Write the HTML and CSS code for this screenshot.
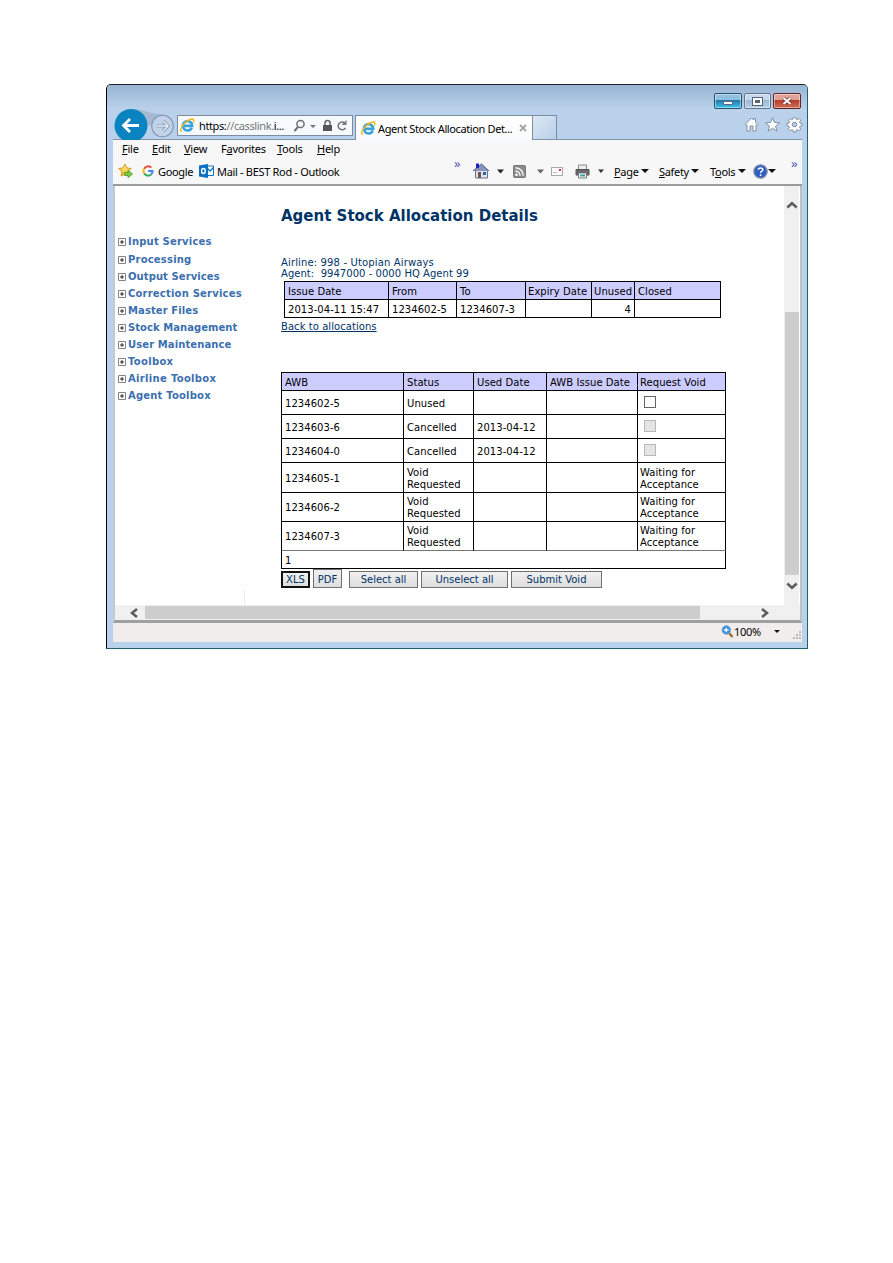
FILE: index.html
```html
<!DOCTYPE html>
<html lang="en">
<head>
<meta charset="utf-8">
<title>Agent Stock Allocation Details</title>
<link rel="stylesheet" href="styles.css">
</head>
<body>
<svg width="0" height="0" class="defs">
  <defs>
    <linearGradient id="gold" x1="0" y1="0" x2="0" y2="1"><stop offset="0" stop-color="#fff2a0"/><stop offset="1" stop-color="#f2b81c"/></linearGradient>
    <symbol id="ie" viewBox="0 0 16 16">
      <path d="M12.6 10.3A5 5 0 1 1 13 8.4H4.2" fill="none" stroke="#35a3dc" stroke-width="2.8"/>
      <path d="M2 13.6C-.6 15.4.5 10.500 4.400 6.200 8.500 1.800 13.800-.2 14.600 1.900c.3.800 0 1.800-.6 2.900" fill="none" stroke="#f3b817" stroke-width="1.500"/>
    </symbol>
    <symbol id="plus" viewBox="0 0 8 8"><path d="M.5.5h7v7h-7z" fill="#fff" stroke="#848484"/><path d="M2 4h4M4 2v4" stroke="#000" stroke-width=".8"/></symbol>
  </defs>
</svg>
<div class="window">
  <header class="titlebar">
    <div class="controls">
      <span class="ctl min"><i></i></span>
      <span class="ctl max"><i></i></span>
      <span class="ctl close"><svg width="10" height="8" viewBox="0 0 10 8"><path d="M1.500 1l7 6M8.500 1l-7 6" stroke="#6b3030" stroke-width="3.400"/><path d="M1.500 1l7 6M8.500 1l-7 6" stroke="#fff" stroke-width="2"/></svg></span>
    </div>
    <div class="navbar">
      <svg class="backfwd" width="62" height="31" viewBox="0 0 62 31">
        <path d="M18 0C32 0 36 5 48 5V16H18z" fill="#a5b9d2"/>
        <circle cx="18" cy="16.500" r="16.500" fill="#0a84c1"/>
        <path d="M26 16.500H11M17 10l-6.500 6.500L17 23" fill="none" stroke="#fff" stroke-width="2.800"/>
        <circle cx="49.500" cy="17" r="10.800" fill="#c1d3ea" stroke="#8495ad" stroke-width="1.100"/>
        <path d="M43.500 17h11M50 12l5 5-5 5" fill="none" stroke="#8799b1" stroke-width="3.200"/>
        <path d="M43.500 17h11M50 12l5 5-5 5" fill="none" stroke="#e5edf7" stroke-width="1.500"/>
      </svg>
      <div class="address">
        <svg class="ie" width="15" height="15"><use href="#ie"/></svg>
        <span class="url"><span>https:</span><em>//casslink.</em><span>i...</span></span>
        <svg class="addr-icons" width="58" height="14" viewBox="0 0 58 14">
          <circle cx="9.500" cy="5" r="3.600" fill="none" stroke="#6d6d6d" stroke-width="1.500"/><path d="M7 7.800L3.500 12" stroke="#6d6d6d" stroke-width="2"/>
          <path d="M19 6h6l-3 3z" fill="#777"/>
          <path d="M32 6h9v6h-9z" fill="#555"/><path d="M34 6V4a2.500 2.500 0 0 1 5 0v2" fill="none" stroke="#666" stroke-width="1.500"/>
          <path d="M54.500 8.800A3.900 3.900 0 1 1 53.500 3.800" fill="none" stroke="#777" stroke-width="1.600"/><path d="M55.500 1v5h-5z" fill="#777"/>
        </svg>
      </div>
      <div class="tab"><svg width="15" height="15"><use href="#ie"/></svg><span class="tabtext">Agent Stock Allocation Det...</span>
        <svg class="tabx" width="8" height="8" viewBox="0 0 8 8"><path d="M1 1l6 6M7 1L1 7" stroke="#a5a5a5" stroke-width="1.800"/></svg></div>
      <div class="newtab"></div>
      <svg class="cmd" width="60" height="16" viewBox="0 0 60 16">
        <g fill="#fff" stroke="#8290a4" stroke-width="1">
          <path d="M1 7.500L7.500 1l2 2V1.500h2V5l2.500 2.500-1 1.200-1-1V14H9V9H6v5H3V7.700l-1 1z"/>
          <path transform="translate(6 0)" d="M22.500.8l1.900 4.700 5.100.3-3.900 3.300 1.300 5-4.400-2.800-4.400 2.800 1.300-5-3.900-3.300 5.100-.3z"/>
          <g transform="translate(6.500 -1)"><path d="M42.800 1.200h2.400l.4 1.900 1.300.5 1.600-1.100 1.700 1.700-1.100 1.600.5 1.300 1.900.4v2.300l-1.900.4-.5 1.300 1.100 1.600-1.700 1.700-1.600-1.100-1.300.5-.4 1.900h-2.400l-.4-1.900-1.300-.5-1.600 1.100-1.700-1.700 1.100-1.600-.5-1.300-1.900-.4V7.500l1.900-.4.5-1.300-1.100-1.600 1.700-1.700 1.600 1.100 1.300-.5z"/>
          <circle cx="44" cy="8.500" r="2.300" fill="#b5cce9"/></g>
        </g>
      </svg>
    </div>
  </header>
  <nav class="menubar">
    <span class="m1"><u>F</u>ile</span><span class="m2"><u>E</u>dit</span><span class="m3"><u>V</u>iew</span><span class="m4">F<u>a</u>vorites</span><span class="m5"><u>T</u>ools</span><span class="m6"><u>H</u>elp</span>
  </nav>
  <div class="toolbar">
    <div class="links">
      <svg width="16" height="16" viewBox="0 0 16 16"><path d="M7 1l1.900 4 4.300.5-3.200 3 .8 4.500L7 11l-3.900 2 .8-4.500-3.200-3L5 5z" fill="url(#gold)" stroke="#d69a12"/><path d="M6.500 9.500H10V7.300l4.500 3.700-4.500 3.700v-2.200H6.500z" fill="#7ccb45" stroke="#4c9427" stroke-width=".8"/></svg>
      <svg class="g" width="12" height="12" viewBox="0 0 12 12" fill="none" stroke-width="2"><path d="M9.300 2.600A4.600 4.600 0 0 0 2.100 3.700" stroke="#ea4335"/><path d="M2.100 3.700a4.600 4.600 0 0 0 0 4.600" stroke="#fbbc05"/><path d="M2.100 8.300a4.600 4.600 0 0 0 7 1.200" stroke="#34a853"/><path d="M9.100 9.500A4.600 4.600 0 0 0 10.600 6H6.200" stroke="#4285f4"/></svg>
      <span class="google">Google</span>
      <svg class="ol" width="15" height="14" viewBox="0 0 15 14"><path d="M7 2h7.500v9.500H7z" fill="#fff" stroke="#0a72c6"/><path d="M7.500 3.500L11 7l3.500-3.500" fill="none" stroke="#0a72c6" stroke-width="1.300"/><path d="M0 1.500L9 0v14l-9-1.500z" fill="#0a6fc2"/><ellipse cx="4.400" cy="7" rx="1.800" ry="2.500" fill="none" stroke="#fff" stroke-width="1.400"/></svg>
      <span class="mail">Mail - BEST Rod - Outlook</span>
    </div>
    <span class="chev c1">»</span>
    <div class="cmds">
      <svg width="165" height="18" viewBox="0 0 165 18">
        <path d="M2.500 8h12v8h-12z" fill="#dce3ee" stroke="#66718a"/><path d="M0 9L8.500 2l7.500 7" fill="#8794b8" stroke="#4b5b86"/><path d="M3 1.500h3V6H3z" fill="#1d22bd"/><path d="M5 10h3v6H5z" fill="#7c543d"/><path d="M10 10h3v3h-3z" fill="#335fb8"/>
        <path d="M24 7.500h7l-3.500 4z" fill="#222"/>
        <rect x="40.500" y="3.500" width="12" height="12" rx="1" fill="#8b8b8b" stroke="#777"/><circle cx="43.500" cy="12.700" r="1.300" fill="#fff"/><path d="M42.500 9a4.500 4.500 0 0 1 4.500 4.700M42.500 5.700a7.700 7.700 0 0 1 7.700 8" fill="none" stroke="#fff" stroke-width="1.400"/>
        <path d="M64 7.500h7l-3.500 4z" fill="#666"/>
        <rect x="78.500" y="5.500" width="11" height="8" fill="#fff" stroke="#aaa"/><path d="M86 7h2v2h-2z" fill="#e3363b"/><path d="M80 10.500h4" stroke="#bbb"/>
        <path d="M105.500 3h8v5h-8z" fill="#eee" stroke="#888"/><path d="M103 7.500h13v5.500h-13z" fill="#65686c" stroke="#555"/><path d="M105.500 11h8v5h-8z" fill="#fff" stroke="#777"/><path d="M107 13.500h3" stroke="#35a0e8" stroke-width="2"/><path d="M110 13.500h2" stroke="#3a9f55" stroke-width="2"/>
        <path d="M125 7.500h6l-3 3.500z" fill="#333"/>
      </svg>
      <span class="page"><u>P</u>age</span><i class="tri"></i>
      <span class="safety"><u>S</u>afety</span><i class="tri"></i>
      <span class="tools">T<u>o</u>ols</span><i class="tri"></i>
      <svg class="help" width="15" height="15" viewBox="0 0 15 15"><circle cx="7.500" cy="7.500" r="6.700" fill="#2c5fc4" stroke="#8a94a6" stroke-width="1.300"/><path d="M5.300 5.700C5.400 3.500 9.800 3.300 9.800 5.700c0 1.500-2.200 1.600-2.200 3.300M7.600 10.200v1.700" fill="none" stroke="#fff" stroke-width="1.600"/></svg><i class="tri"></i>
    </div>
    <span class="chev c2">»</span>
  </div>
  <div class="view">
    <aside class="side">
      <ul class="tree">
        <li><svg><use href="#plus"/></svg><span class="t1">Input Services</span></li>
        <li><svg><use href="#plus"/></svg><span class="t2">Processing</span></li>
        <li><svg><use href="#plus"/></svg><span class="t3">Output Services</span></li>
        <li><svg><use href="#plus"/></svg><span class="t4">Correction Services</span></li>
        <li><svg><use href="#plus"/></svg><span class="t5">Master Files</span></li>
        <li><svg><use href="#plus"/></svg><span class="t6">Stock Management</span></li>
        <li><svg><use href="#plus"/></svg><span class="t7">User Maintenance</span></li>
        <li><svg><use href="#plus"/></svg><span class="t8">Toolbox</span></li>
        <li><svg><use href="#plus"/></svg><span class="t9">Airline Toolbox</span></li>
        <li><svg><use href="#plus"/></svg><span class="t10">Agent Toolbox</span></li>
      </ul>
      <div class="divider"></div>
    </aside>
    <main class="main">
      <h1>Agent Stock Allocation Details</h1>
      <p class="info"><span class="airline">Airline: 998 - Utopian Airways</span><br><span class="agent">Agent:&nbsp; 9947000 - 0000 HQ Agent 99</span></p>
      <table class="alloc">
        <colgroup><col class="w104"><col class="w68"><col class="w69"><col class="w66"><col class="w43"><col class="w86"></colgroup>
        <tr><th>Issue Date</th><th>From</th><th>To</th><th class="tight">Expiry Date</th><th class="tight">Unused</th><th>Closed</th></tr>
        <tr><td>2013-04-11 15:47</td><td>1234602-5</td><td>1234607-3</td><td></td><td class="num">4</td><td></td></tr>
      </table>
      <a class="back">Back to allocations</a>
      <table class="awb">
        <colgroup><col class="w122"><col class="w70"><col class="w73"><col class="w91"><col class="w88"></colgroup>
        <tr class="r18"><th>AWB</th><th>Status</th><th>Used Date</th><th>AWB Issue Date</th><th>Request Void</th></tr>
        <tr class="r24"><td>1234602-5</td><td>Unused</td><td></td><td></td><td><i class="box"></i></td></tr>
        <tr class="r24"><td>1234603-6</td><td>Cancelled</td><td>2013-04-12</td><td></td><td><i class="box off"></i></td></tr>
        <tr class="r24"><td>1234604-0</td><td>Cancelled</td><td>2013-04-12</td><td></td><td><i class="box off"></i></td></tr>
        <tr class="r30"><td>1234605-1</td><td>Void<br>Requested</td><td></td><td></td><td>Waiting for<br>Acceptance</td></tr>
        <tr class="r29"><td>1234606-2</td><td>Void<br>Requested</td><td></td><td></td><td>Waiting for<br>Acceptance</td></tr>
        <tr class="r29 last"><td>1234607-3</td><td>Void<br>Requested</td><td></td><td></td><td>Waiting for<br>Acceptance</td></tr>
        <tr class="r18"><td colspan="5">1</td></tr>
      </table>
      <div class="buttons">
        <button class="xls">XLS</button><button class="pdf">PDF</button><button class="sel">Select all</button><button class="unsel">Unselect all</button><button class="submit">Submit Void</button>
      </div>
    </main>
    <div class="vscroll">
      <svg width="12" height="8" viewBox="0 0 12 8"><path d="M1.300 6.500L6 2.300l4.700 4.200" fill="none" stroke="#5c5c5c" stroke-width="2.500"/></svg>
      <div class="vthumb"></div>
      <svg width="12" height="8" viewBox="0 0 12 8"><path d="M1.300 1.500L6 5.700l4.700-4.200" fill="none" stroke="#5c5c5c" stroke-width="2.500"/></svg>
    </div>
  </div>
  <div class="hscroll">
    <svg class="hl" width="10" height="10" viewBox="0 0 10 10"><path d="M8 1L3 5l5 4" fill="none" stroke="#5c5c5c" stroke-width="2.500"/></svg>
    <div class="hthumb"></div>
    <svg class="hr" width="10" height="10" viewBox="0 0 10 10"><path d="M2 1l5 4-5 4" fill="none" stroke="#5c5c5c" stroke-width="2.500"/></svg>
  </div>
  <footer class="status">
    <svg width="13" height="13" viewBox="0 0 13 13"><path d="M8 8l3.500 4" stroke="#a36b3c" stroke-width="2.500"/><circle cx="5.300" cy="5" r="4.300" fill="#2d8be0" stroke="#8ba7c4"/><path d="M3 5h4.600M5.300 2.700v4.600" stroke="#fff" stroke-width="1.400"/></svg>
    <span class="pct">100%</span><i class="tri"></i>
    <svg class="grip" width="9" height="9" viewBox="0 0 9 9" fill="#bcb8b6"><path d="M6 0h2v2H6zM3 3h2v2H3zM6 3h2v2H6zM0 6h2v2H0zM3 6h2v2H3zM6 6h2v2H6z"/></svg>
  </footer>
</div>
</body>
</html>
```
FILE: styles.css
```css
* { box-sizing: border-box; }
body { margin: 0; background: #fff; font-family: "DejaVu Sans", sans-serif; font-size: 10px; color: #000; }
.defs { position: absolute; }
svg { display: block; flex: none; }
u { text-underline-offset: 1px; }
.window { width: 702px; height: 565px; margin: 84px 0 0 106px; border: 1px solid #1c6474; border-top: 1px solid #222; border-left-color: #000; border-radius: 5px 5px 0 0; background: #b9d1ea; padding: 0 5px 6px 6px; display: flex; flex-direction: column; overflow: hidden; }
.titlebar { height: 55px; margin: 0 -5px 0 -6px; padding: 1px 5px 0 6px; background: linear-gradient(#98b4d2, #b9d1ea 24px); display: flex; flex-direction: column; flex: none; }
.controls { display: flex; justify-content: flex-end; gap: 2px; height: 23px; padding: 7px 1px 0 0; }
.ctl { height: 16px; display: flex; align-items: center; justify-content: center; border: 1px solid #60758e; border-radius: 2px; box-shadow: inset 0 0 0 1px rgba(255,255,255,.45); }
.min { width: 28px; background: linear-gradient(#8dc0df 45%, #2878a9 46%, #36c6ee); border-color: #27506d; }
.min i { width: 10px; height: 4px; margin-top: 3px; background: #fff; border: 1px solid #667; border-radius: 1px; }
.max { width: 27px; background: linear-gradient(#c5d7ea 45%, #9db7d3 46%, #b9d0e8); }
.max i { width: 9px; height: 7px; border: 2px solid #fff; outline: 1px solid #56657a; background: #56657a; }
.close { width: 28px; background: linear-gradient(#e0a196 45%, #b53e2b 46%, #cf6d55); border-color: #5e2426; }
.navbar { display: flex; align-items: flex-start; height: 31px; border-bottom: 1px solid #8593a8; font-family: "Noto Sans", sans-serif; font-size: 11px; }
.address { width: 176px; flex: none; height: 21px; margin: 6px 0 0 2px; border: 1px solid #7d8ca1; background: #f6f9fd; display: flex; align-items: center; padding-left: 2px; }
.url { margin-left: 4px; width: 87px; white-space: nowrap; letter-spacing: -.38px; }
.url em { font-style: normal; color: #777; }
.addr-icons { margin-left: 5px; }
.tab { width: 178px; flex: none; height: 25px; margin: 6px 0 0 2px; border: 1px solid #7d8ca1; border-bottom: 0; background: linear-gradient(#fff, #f9fafb); display: flex; align-items: center; padding-left: 5px; }
.tabtext { margin-left: 2px; width: 141px; white-space: nowrap; letter-spacing: -.38px; }
.newtab { width: 24px; flex: none; height: 24px; margin-top: 6px; border: 1px solid #7d8ca1; border-left: 0; border-bottom: 0; background: linear-gradient(135deg, #dbe8f5, #b8cfe8); }
.cmd { margin: 8px 0 0 187px; }
.menubar { height: 20px; flex: none; background: #f7f7f7; display: flex; align-items: center; padding: 0 0 3px 9px; font: 11px "Noto Sans", sans-serif; letter-spacing: -.25px; }
.m1 { width: 30px; } .m2 { width: 32px; } .m3 { width: 37px; } .m4 { width: 56px; } .m5 { width: 40px; }
.toolbar { height: 26px; flex: none; background: #f7f7f7; border-bottom: 2px solid #9b9b9b; display: flex; align-items: center; padding: 0 0 2px 5px; font: 11px "Noto Sans", sans-serif; letter-spacing: -.32px; white-space: nowrap; }
.links { display: flex; align-items: center; flex: none; width: 336px; }
.g { margin-left: 8px; }
.google { margin-left: 4px; width: 37px; }
.ol { margin-left: 4px; }
.mail { margin-left: 3px; }
.chev { color: #5a5ab0; flex: none; width: 19px; height: 24px; line-height: 8px; font-size: 13px; }
.cmds { display: flex; align-items: center; flex: none; width: 318px; }
.page { margin-left: -24px; width: 27px; }
.safety { margin-left: 10px; width: 32px; }
.tools { margin-left: 11px; width: 28px; }
.tri { border: 4px solid transparent; border-top-color: #111; border-bottom: 0; width: 0; height: 0; }
.help { margin-left: 7px; }
.view { height: 419px; flex: none; background: #fff; display: flex; border-left: 2px solid #c8c8c8; border-right: 2px solid #c0c0c0; }
.side { width: 130px; display: flex; flex-direction: column; justify-content: space-between; }
.tree { list-style: none; margin: 46px 0 0 3px; padding: 0; color: #3b6fae; font-weight: bold; letter-spacing: .2px; }
.tree li { display: flex; align-items: center; height: 17px; white-space: nowrap; }
.tree li:first-child { height: 18px; }
.tree svg { width: 8px; height: 8px; margin: 1px 2px 0 0; }
.tree .t3 { letter-spacing: .08px; }
.tree .t5, .tree .t7 { letter-spacing: .1px; }
.tree .t6 { letter-spacing: .05px; }
.tree .t8, .tree .t9 { letter-spacing: .32px; }
.tree li:nth-child(2) { padding-top: 1px; }
.tree li:nth-child(n+3) { padding-top: 1px; }
.divider { height: 16px; width: 1px; background: #ececec; margin-left: 129px; }
.main { padding-left: 36px; width: 539px; color: #003366; }
h1 { font-size: 15px; line-height: 18px; margin: 21px 0 0; white-space: nowrap; }
.info { margin: 32px 0 0; line-height: 11px; white-space: nowrap; }
.airline { letter-spacing: .14px; }
.agent { letter-spacing: .04px; }
table { border-spacing: 0; table-layout: fixed; color: #000; border: solid #000; border-width: 1px 0 0 1px; letter-spacing: .06px; }
th, td { font-weight: normal; text-align: left; padding: 2px 0 0 3px; border: solid #000; border-width: 0 1px 1px 0; line-height: 12px; white-space: nowrap; vertical-align: middle; }
th { background: #ccccff; }
.alloc { width: 437px; margin: 2px 0 0 3px; }
.alloc tr { height: 18px; }
.alloc .tight { padding-left: 2px; }
.alloc .num { text-align: right; padding-right: 3px; }
.w104 { width: 104px; } .w68 { width: 68px; } .w69 { width: 69px; } .w66 { width: 66px; } .w43 { width: 43px; } .w86 { width: 86px; }
.w122 { width: 122px; } .w70 { width: 70px; } .w73 { width: 73px; } .w91 { width: 91px; } .w88 { width: 88px; }
.back { display: block; line-height: 12px; margin-top: 3px; text-decoration: underline; letter-spacing: .06px; }
.awb { width: 445px; margin-top: 39px; }
.awb td:nth-child(5), .awb th:nth-child(5) { padding-left: 2px; }
.r18 { height: 18px; } .r24 { height: 24px; } .r29 { height: 29px; } .r30 { height: 30px; }
.last td { border-bottom-color: #777; }
.box { display: block; width: 12px; height: 12px; margin: -3px 0 0 4px; border: 1px solid #666; background: #fff; }
.box.off { border-color: #b8b8b8; background: #e4e4e4; }
.buttons { display: flex; align-items: flex-end; height: 19px; }
button { font: 10px "DejaVu Sans", sans-serif; color: #003366; height: 17px; padding: 0; border: 1px solid #707070; background: linear-gradient(#f0f0f0, #dedede); white-space: nowrap; }
.xls { width: 29px; border: 2px solid #111; }
.pdf { width: 29px; height: 19px; margin-left: 3px; padding-top: 2px; }
.sel { width: 69px; margin-left: 7px; }
.unsel { width: 87px; margin-left: 3px; }
.submit { width: 91px; margin-left: 3px; }
.vscroll { width: 15px; background: #f0f0f0; display: flex; flex-direction: column; align-items: center; padding-top: 15px; }
.vthumb { width: 14px; height: 263px; margin: 103px 0 7px; background: #cdcdcd; }
.hscroll { height: 18px; flex: none; display: flex; align-items: center; background: #f0f0f0; border-left: 2px solid #c8c8c8; border-bottom: 3px solid #a0a0a0; border-right: 2px solid #c0c0c0; }
.hl { margin-left: 14px; }
.hthumb { width: 555px; height: 13px; margin-left: 6px; background: #cdcdcd; }
.hr { margin-left: 60px; }
.status { flex: 1; background: #f0edec; display: flex; align-items: center; padding: 0 0 2px 608px; font: 11px "Noto Sans", sans-serif; }
.pct { width: 42px; letter-spacing: -.3px; }
.status .tri { border-width: 3px 3px 0; }
.grip { margin: 8px 0 0 13px; }
```
